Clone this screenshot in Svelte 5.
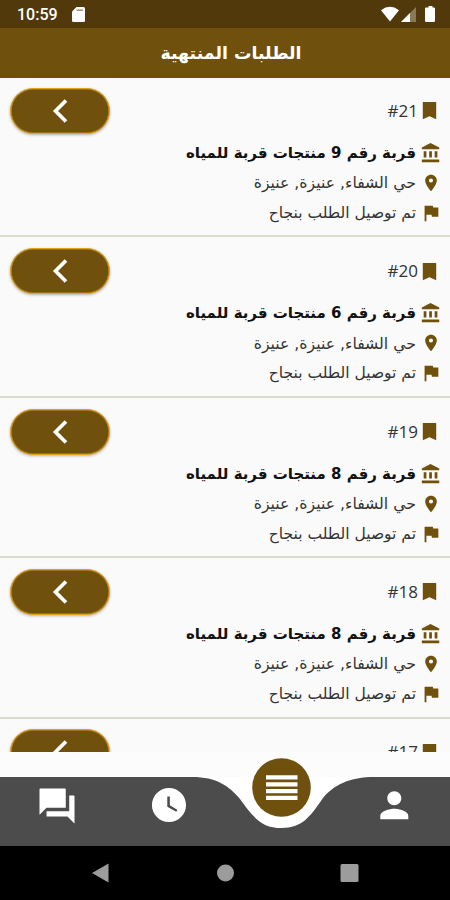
<script lang="ts">
  interface Order {
    id: number;
    products: number;
  }

  const orders: Order[] = [
    { id: 21, products: 9 },
    { id: 20, products: 6 },
    { id: 19, products: 8 },
    { id: 18, products: 8 },
    { id: 17, products: 8 },
  ];

  const address = "حي الشفاء, عنيزة, عنيزة";
  const status = "تم توصيل الطلب بنجاح";

  const icons = {
    bookmark: "M5 3h14v18l-7-3-7 3z",
    bank: "M4 10v7h3v-7H4zm6 0v7h3v-7h-3zM2 22h19v-3H2v3zm14-12v7h3v-7h-3zm-4.500-9L2 6v2h19V6l-9.500-5z",
    pin: "M12 2C8.130 2 5 5.130 5 9c0 5.250 7 13 7 13s7-7.750 7-13c0-3.870-3.130-7-7-7zm0 9.500a2.500 2.500 0 0 1 0-5 2.500 2.500 0 0 1 0 5z",
    flag: "M14.400 6 14 4H5v17h2v-7h5.600l.4 2h7V6z",
  };
</script>

{#snippet icon(path: string, kind: string)}
  <svg class="icon {kind}" viewBox="0 0 24 24"><path d={path} /></svg>
{/snippet}

<div class="screen" dir="rtl">
  <div class="status-bar" dir="ltr">
    <span class="time">10:59</span>
    <svg class="sd" viewBox="0 0 13 15">
      <path d="M4.500 0H11.500Q13 0 13 1.500V13.500Q13 15 11.500 15H1.500Q0 15 0 13.500V4.500Z" />
      <path class="slots" d="M4.500 2.500h6.500v1.200H4.500z" />
    </svg>
    <svg class="signals" viewBox="0 0 54 17">
      <path d="M0 4.200Q9 -2.500 18 4.200L9 15.500Z" />
      <path class="faint" d="M35 1V16H20Z" />
      <path d="M29 7V16H20Z" />
      <path d="M45 1.500h2.500V0h4v1.500H53q1 0 1 1.200V14.500q0 1.500-1.200 1.500H45.200Q44 16 44 14.500V2.700q0-1.200 1-1.200Z" />
    </svg>
  </div>

  <header><h1>الطلبات المنتهية</h1></header>

  <main>
    {#each orders as order (order.id)}
      <article>
        <div class="head">
          <div class="row">
            {@render icon(icons.bookmark, "bookmark")}
            <span class="number" dir="ltr">#{order.id}</span>
          </div>
          <button aria-label="عرض الطلب">
            <svg viewBox="0 0 16 24"><path d="M14 1.500 3.500 12 14 22.500" /></svg>
          </button>
        </div>
        <div class="row">
          {@render icon(icons.bank, "bank")}
          <strong>قربة رقم {order.products} منتجات قربة للمياه</strong>
        </div>
        <div class="row">
          {@render icon(icons.pin, "pin")}
          <span class="address">{address}</span>
        </div>
        <div class="row">
          {@render icon(icons.flag, "flag")}
          <span class="state">{status}</span>
        </div>
      </article>
    {/each}
  </main>

  <footer>
    <svg viewBox="0 0 450 94">
      <rect class="gap" width="450" height="25" />
      <rect y="25" width="450" height="69" />
      <path class="bar" d="M0 25H192C217 25 229 34 240 47C253 65 261 76 281.500 76C302 76 310 65 323 46C334 33 349 25 375 25H450V94H0Z" />
      <circle class="menu" cx="281.500" cy="35.500" r="29.300" />
      <path d="M266 23.300h31.500v4.200h-31.500zM266 30.200h31.500v4.200h-31.500zM266 37h31.500v4.200h-31.500zM266 43.800h31.500v4.200h-31.500z" />
      <svg x="36" y="33" width="42" height="42" viewBox="0 0 24 24">
        <path d="M21.500 6H19v9H6v3h12l4 4V6.500q0-.5-.5-.5zM17 13V2.500q0-.5-.5-.5h-14q-.5 0-.5.500V17l4-4z" />
      </svg>
      <svg x="148.500" y="32.500" width="41" height="41" viewBox="0 0 24 24">
        <path d="M12 2C6.500 2 2 6.500 2 12s4.500 10 10 10 10-4.500 10-10S17.500 2 12 2zm4.200 14L11 13V7h1.500v5.200l4.500 2.700-.8 1.100z" />
      </svg>
      <svg x="373.300" y="32.300" width="42" height="42" viewBox="0 0 24 24">
        <path d="M12 12c2.210 0 4-1.790 4-4s-1.790-4-4-4-4 1.790-4 4 1.790 4 4 4zm0 2c-2.670 0-8 1.340-8 4v2h16v-2c0-2.660-5.330-4-8-4z" />
      </svg>
    </svg>
  </footer>

  <svg class="system-nav" viewBox="0 0 450 54">
    <path d="M92 27 108.500 17.500V36.500Z" />
    <circle cx="225.500" cy="27" r="8.500" />
    <rect x="340.500" y="18" width="18" height="18" rx="1.500" />
  </svg>
</div>

<style>
  :global(body) {
    margin: 0;
  }

  .screen {
    width: 450px;
    height: 900px;
    display: flex;
    flex-direction: column;
    overflow: hidden;
    background: #fafafa;
    font-family: "DejaVu Sans", sans-serif;
    color: #333;
  }

  svg {
    display: block;
    flex: none;
  }

  .status-bar {
    flex: none;
    box-sizing: border-box;
    height: 28px;
    padding: 0 15px 0 17px;
    display: flex;
    align-items: center;
    background: #51390b;
    color: #fff;
    fill: #fff;
  }

  .time {
    font: 500 16px/28px Roboto, sans-serif;
    width: 55px;
    padding-top: 1px;
  }

  .sd {
    width: 13px;
    height: 15px;
  }

  .slots {
    fill: #8a7650;
  }

  .signals {
    width: 54px;
    height: 17px;
    margin-left: auto;
  }

  .faint {
    fill: #8a7a55;
  }

  header {
    flex: none;
    height: 50px;
    display: flex;
    align-items: center;
    justify-content: center;
    padding-left: 12px;
    background: #70500d;
    color: #fff;
  }

  h1 {
    margin: 0;
    font-size: 17.400px;
    line-height: 50px;
    white-space: nowrap;
  }

  main {
    flex: none;
    height: 674px;
    overflow: hidden;
  }

  article {
    box-sizing: border-box;
    height: 160.400px;
    padding: 10.800px 9px 0 10px;
    border-bottom: 2px solid #dadacf;
  }

  article:first-child {
    margin-top: -1px;
  }

  .head {
    height: 50px;
    display: flex;
    justify-content: space-between;
    align-items: flex-start;
  }

  .row {
    height: 30px;
    display: flex;
    align-items: center;
    gap: 5px;
    white-space: nowrap;
  }

  .head .row {
    height: 46px;
    gap: 0;
  }

  .icon {
    width: 20px;
    height: 20px;
    fill: #70500d;
  }

  .bookmark {
    width: 23px;
    height: 23px;
  }

  .bank,
  .flag {
    width: 22px;
    height: 22px;
    margin: 0 -1px;
  }

  .number {
    font: 17px/30px "Open Sans", sans-serif;
  }

  strong {
    font-size: 15px;
    color: #111;
  }

  .address {
    font-size: 15.700px;
  }

  .state {
    font-size: 15.500px;
  }

  button {
    box-sizing: border-box;
    width: 100px;
    height: 46px;
    padding: 0;
    border: 1px solid #e0a31f;
    border-radius: 23px;
    display: flex;
    align-items: center;
    justify-content: center;
    background: #70500d;
    box-shadow:
      inset 0 0 0 0.600px #c98f1a,
      0 1px 3px rgba(0, 0, 0, 0.3);
  }

  button svg {
    width: 16px;
    height: 24px;
    fill: none;
    stroke: #fff;
    stroke-width: 3.700;
  }

  footer {
    flex: none;
    height: 94px;
    fill: #fff;
  }

  .gap {
    fill: #fcfcfc;
  }

  .bar {
    fill: #4c4c4c;
  }

  .menu {
    fill: #70500d;
  }

  .system-nav {
    width: 450px;
    height: 54px;
    background: #000;
    fill: #9c9c9c;
  }
</style>
